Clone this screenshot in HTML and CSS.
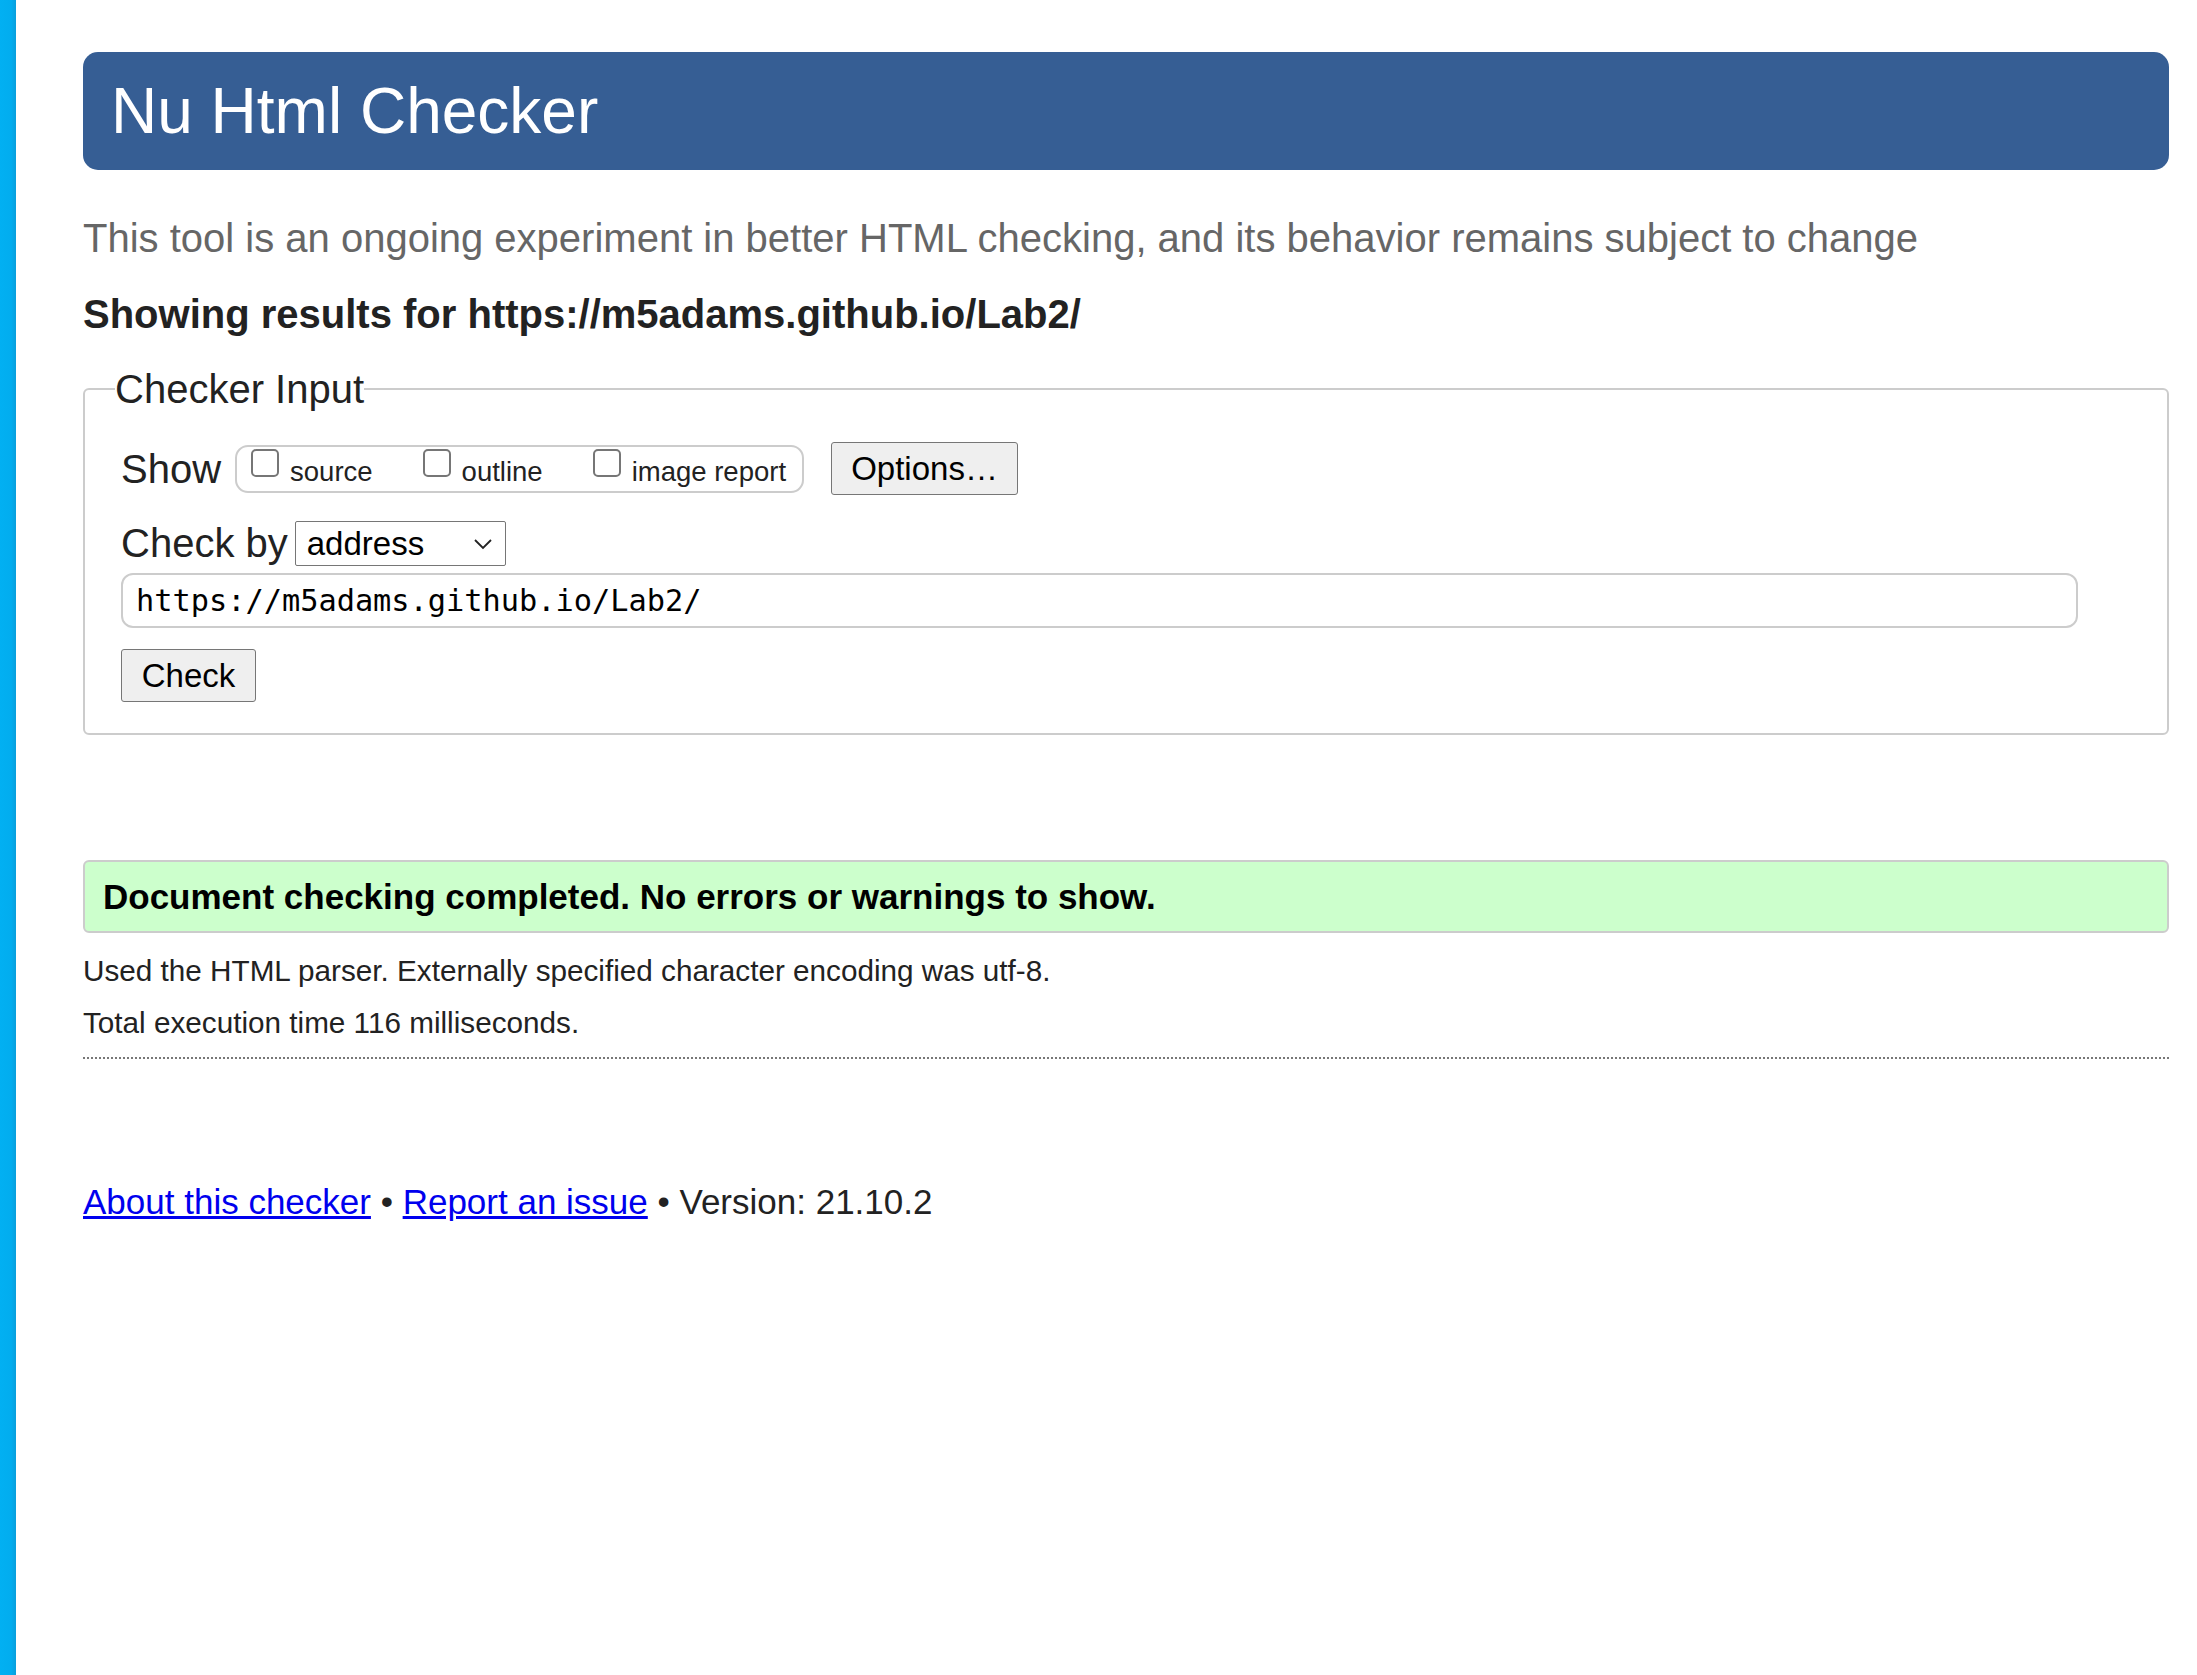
FILE: index.html
```html
<!DOCTYPE html>
<html lang="en">
<head>
<meta charset="utf-8">
<title>Nu Html Checker</title>
<link rel="stylesheet" href="styles.css">
</head>
<body>
<div class="stripe"></div>
<main class="page">
  <h1 class="banner">Nu Html Checker</h1>
  <p class="subtitle">This tool is an ongoing experiment in better HTML checking, and its behavior remains subject to change</p>
  <h2 class="results">Showing results for https://m5adams.github.io/Lab2/</h2>
  <form class="form">
    <fieldset class="checker">
      <legend class="legend">Checker Input</legend>
      <div class="row row-show">
        <span class="label">Show</span>
        <div class="group">
          <label class="opt"><input type="checkbox" class="cb"><span>source</span></label>
          <label class="opt"><input type="checkbox" class="cb"><span>outline</span></label>
          <label class="opt"><input type="checkbox" class="cb"><span>image report</span></label>
        </div>
        <button type="button" class="btn btn-options">Options…</button>
      </div>
      <div class="row row-by">
        <span class="label">Check by</span>
        <span class="select-wrap">
          <select class="select"><option>address</option></select>
          <svg class="chev" width="20" height="12" viewBox="0 0 20 12"><path d="M2 2 L10 10 L18 2" fill="none" stroke="#222" stroke-width="1.8"/></svg>
        </span>
      </div>
      <div class="row row-url">
        <input class="url" type="text" value="https://m5adams.github.io/Lab2/">
      </div>
      <div class="row row-check">
        <button type="button" class="btn btn-check">Check</button>
      </div>
    </fieldset>
  </form>
  <p class="success">Document checking completed. No errors or warnings to show.</p>
  <p class="info">Used the HTML parser. Externally specified character encoding was utf-8.</p>
  <p class="info">Total execution time 116 milliseconds.</p>
  <hr class="sep">
  <p class="footer"><a href="#">About this checker</a> • <a href="#">Report an issue</a> • Version: 21.10.2</p>
</main>
</body>
</html>
```
FILE: styles.css
```css
html, body {
  margin: 0;
  padding: 0;
  background: #fff;
}
body {
  display: flex;
  min-height: 1675px;
  font-family: "Liberation Sans", Arial, sans-serif;
  color: #222;
}
.stripe {
  width: 16px;
  flex: 0 0 16px;
  background: linear-gradient(to right, #02b0f2 0%, #02adef 70%, #0a9fdc 100%);
}
.page {
  flex: 1;
  padding: 52px 28px 0 67px;
}
.banner {
  margin: 0;
  height: 118px;
  line-height: 118px;
  padding-left: 28px;
  background: #365e94;
  color: #fff;
  font-size: 64px;
  font-weight: normal;
  border-radius: 15px;
}
.subtitle {
  margin: 45px 0 0;
  font-size: 40px;
  line-height: 46px;
  color: #666;
}
.results {
  margin: 30px 0 0;
  font-size: 40px;
  line-height: 46px;
  font-weight: bold;
  color: #222;
}
.form {
  margin: 0;
}
.checker {
  margin: 29px 0 0;
  padding: 30px 36px 31px 36px;
  border: 2px solid #ccc;
  border-radius: 6px;
}
.legend {
  padding: 0;
  margin-left: -6px;
  font-size: 40px;
  line-height: 46px;
  color: #222;
}
.row {
  display: flex;
  align-items: center;
}
.label {
  font-size: 40px;
  line-height: 46px;
  color: #222;
}
.row-show {
  height: 53px;
}
.group {
  margin-left: 14px;
  height: 44px;
  display: flex;
  align-items: flex-start;
  gap: 50px;
  padding: 0 16px 0 14px;
  border: 2px solid #ccc;
  border-radius: 13px;
}
.opt {
  display: flex;
  align-items: flex-start;
  font-size: 27.5px;
  line-height: 30px;
  color: #222;
}
.opt span {
  margin-top: 10px;
  margin-left: 11px;
}
.cb {
  appearance: none;
  -webkit-appearance: none;
  width: 28px;
  height: 28px;
  margin: 2px 0 0 0;
  border: 2px solid #767676;
  border-radius: 5px;
  background: #fff;
}
.btn {
  font-family: "Liberation Sans", Arial, sans-serif;
  font-size: 33px;
  color: #000;
  background: #efefef;
  border: 1.5px solid #767676;
  border-radius: 3px;
}
.btn-options {
  margin-left: 27px;
  width: 187px;
  height: 53px;
  padding: 0;
}
.row-by {
  margin-top: 25px;
}
.select-wrap {
  position: relative;
  margin-left: 7px;
  display: inline-block;
}
.select {
  appearance: none;
  -webkit-appearance: none;
  width: 211px;
  height: 45px;
  padding: 0 0 0 11px;
  font-family: "Liberation Sans", Arial, sans-serif;
  font-size: 33px;
  color: #000;
  background: #fff;
  border: 1.5px solid #767676;
  border-radius: 2px;
}
.chev {
  position: absolute;
  left: 178px;
  top: 17px;
  pointer-events: none;
}
.row-url {
  margin-top: 7px;
}
.url {
  box-sizing: border-box;
  width: 1957px;
  height: 55px;
  padding: 0 13px;
  font-family: "DejaVu Sans Mono", "Liberation Mono", monospace;
  font-size: 30.3px;
  color: #000;
  border: 2px solid #ccc;
  border-radius: 12px;
  outline: none;
}
.row-check {
  margin-top: 21px;
}
.btn-check {
  width: 135px;
  height: 53px;
  padding: 0;
}
.success {
  margin: 125px 0 0;
  height: 69px;
  line-height: 69px;
  padding-left: 18px;
  font-size: 35px;
  font-weight: bold;
  color: #000;
  background: #ccffcc;
  border: 2px solid #ccc;
  border-radius: 6px;
}
.info {
  margin: 0;
  font-size: 29.7px;
  line-height: 52px;
  color: #222;
}
.success + .info {
  margin-top: 12px;
}
.sep {
  margin: 8px 0 0;
  border: 0;
  border-top: 2px dotted #777;
  height: 0;
}
.footer {
  margin: 123px 0 0;
  font-size: 35px;
  line-height: 40px;
  color: #222;
}
.footer a {
  color: #0000ee;
  text-decoration: underline;
}
```
